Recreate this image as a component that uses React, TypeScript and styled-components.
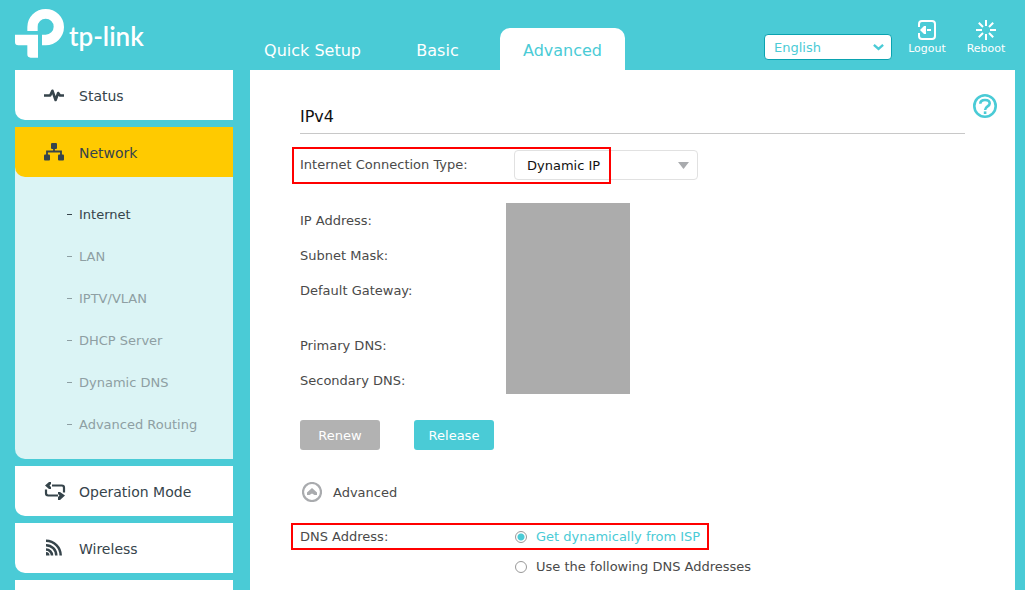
import React, { useState } from 'react';
import styled, { createGlobalStyle, css } from 'styled-components';

const teal = '#4acbd6';
const ink = '#36444b';

const GlobalStyle = createGlobalStyle`
  *, *::before, *::after { box-sizing: border-box; }
  body { margin: 0; background: ${teal}; }
  body, button, select, input { font-family: Verdana, "DejaVu Sans", sans-serif; font-size: 13px; }
  a { color: inherit; text-decoration: none; }
  ul, dl, dt, h1, fieldset { margin: 0; padding: 0; }
  ul { list-style: none; }
`;

const Page = styled.div`
  display: flex;
  flex-direction: column;
  height: 100vh;
  overflow: hidden;
  background: ${teal};
`;

const Header = styled.header`
  display: flex;
  flex: none;
  height: 70px;
  color: #fff;
`;

const Brand = styled.a`
  display: flex;
  align-items: flex-start;
  width: 250px;
  padding: 9px 0 0 15px;
`;

const BrandMark = styled.svg`
  flex: none;
  width: 49px;
  height: 49px;
`;

const BrandName = styled.span`
  margin: 10px 0 0 5px;
  font-family: Lato, sans-serif;
  font-size: 26px;
  font-weight: 600;
  line-height: 34px;
`;

const Tabs = styled.nav`
  display: flex;
  align-items: flex-end;
`;

const Tab = styled.a<{ $active?: boolean }>`
  width: 125px;
  height: 42px;
  border-radius: 10px 10px 0 0;
  font-size: 16px;
  line-height: 45px;
  text-align: center;
  ${(p) => p.$active && css`
    background: #fff;
    color: ${teal};
  `}
`;

const Tools = styled.div`
  display: flex;
  align-items: flex-start;
  margin-left: auto;
  padding-right: 19px;
`;

const SelectBox = styled.div`
  display: grid;
  align-items: center;
  > * { grid-area: 1 / 1; }
  > svg { justify-self: end; pointer-events: none; }
`;

const LanguageBox = styled(SelectBox)`
  width: 128px;
  margin: 34px 15px 0 0;
  > svg { margin-right: 8px; }
`;

const LanguageSelect = styled.select`
  appearance: none;
  height: 26px;
  padding: 0 9px;
  border: 1px solid #0aa3b0;
  border-radius: 4px;
  background: #fff;
  color: ${teal};
`;

const Action = styled.button`
  display: flex;
  flex-direction: column;
  align-items: center;
  width: 40px;
  margin: 20px 0 0;
  padding: 0;
  border: 0;
  background: none;
  color: #fff;
  font-size: 11px;
  line-height: 18px;
  & + & { margin-left: 19px; }
`;

const Body = styled.div`
  display: flex;
  flex: 1;
  min-height: 0;
  padding: 0 10px 0 15px;
  gap: 17px;
`;

const Sidebar = styled.nav`
  flex: none;
  width: 218px;
`;

const Menu = styled.ul`
  display: flex;
  flex-direction: column;
  gap: 7px;
`;

const MenuItem = styled.li<{ $open?: boolean }>`
  min-height: 50px;
  border-bottom-left-radius: 10px;
  background: ${(p) => (p.$open ? '#dbf4f5' : '#fff')};
`;

const MenuLink = styled.a<{ $active?: boolean }>`
  display: flex;
  align-items: center;
  gap: 15px;
  height: 50px;
  padding: 2px 0 0 29px;
  border-bottom-left-radius: 10px;
  background: ${(p) => (p.$active ? '#ffca00' : 'transparent')};
  color: ${ink};
  font-size: 14px;
  > svg { overflow: visible; }
`;

const Submenu = styled.ul`
  padding: 16px 0 14px;
`;

const SubLink = styled.a<{ $active?: boolean }>`
  display: flex;
  align-items: center;
  gap: 7px;
  height: 42px;
  padding-left: 52px;
  color: ${(p) => (p.$active ? ink : '#8e9fa3')};
  &::before { content: ''; width: 5px; height: 1px; margin-top: 1px; background: currentColor; }
`;

const Main = styled.main`
  display: flex;
  flex: 1;
  align-items: flex-start;
  gap: 8px;
  min-width: 0;
  padding: 24px 18px 0 50px;
  background: #fff;
  color: #4a4a4a;
`;

const Content = styled.div`
  flex: 1;
  min-width: 0;
`;

const Title = styled.h1`
  height: 40px;
  padding-top: 4px;
  border-bottom: 1px solid #c8c8c8;
  color: #111;
  font-size: 16px;
  font-weight: 400;
  line-height: 37px;
`;

const HelpButton = styled.button`
  display: flex;
  padding: 0;
  border: 0;
  background: none;
  color: ${teal};
`;

const Row = styled.div`
  position: relative;
  display: grid;
  grid-template-columns: 214px 1fr;
  align-items: center;
  margin-top: 16px;
  line-height: 30px;
`;

const Highlight = styled.span<{ $width: number; $height: number; $inset: number }>`
  position: absolute;
  top: ${(p) => (p.$height > 30 ? -3 : 1)}px;
  left: -${(p) => p.$inset}px;
  width: ${(p) => p.$width}px;
  height: ${(p) => p.$height}px;
  border: 2px solid #f00;
  pointer-events: none;
`;

const TypeBox = styled(SelectBox)`
  width: 184px;
  > svg { margin-right: 9px; }
`;

const TypeSelect = styled.select`
  appearance: none;
  height: 30px;
  padding: 0 12px;
  border: 1px solid #e1e1e1;
  border-radius: 4px;
  background: #fff;
  color: #111;
`;

const Details = styled.div`
  display: flex;
  margin-top: 23px;
`;

const Terms = styled.dl`
  width: 206px;
  line-height: 35px;
`;

const Term = styled.dt<{ $spaced?: boolean }>`
  margin-top: ${(p) => (p.$spaced ? 20 : 0)}px;
`;

const Redaction = styled.div`
  width: 124px;
  margin-bottom: 4px;
  background: #acacac;
`;

const Buttons = styled.div`
  display: flex;
  gap: 34px;
  margin-top: 22px;
`;

const Button = styled.button<{ $muted?: boolean }>`
  width: 80px;
  height: 30px;
  padding: 0;
  border: 0;
  border-radius: 3px;
  background: ${(p) => (p.$muted ? '#b2b2b2' : teal)};
  color: #fff;
`;

const Disclosure = styled.button`
  display: flex;
  align-items: center;
  gap: 11px;
  height: 30px;
  margin-top: 27px;
  padding: 0 0 0 2px;
  border: 0;
  background: none;
  color: inherit;
`;

const RadioRow = styled.fieldset`
  position: relative;
  display: flex;
  margin-top: 15px;
  border: 0;
  line-height: 30px;
`;

const Legend = styled.legend`
  float: left;
  width: 214px;
  padding: 0;
`;

const Option = styled.label<{ $on: boolean }>`
  display: flex;
  align-items: center;
  gap: 8px;
  color: ${(p) => (p.$on ? teal : 'inherit')};
`;

const Radio = styled.input`
  appearance: none;
  width: 12px;
  height: 12px;
  margin: 0 1px;
  border: 1px solid #999;
  border-radius: 50%;
  background: #fff;
  &:checked {
    background: radial-gradient(circle, ${teal} 3px, #fff 4px);
  }
`;

const StatusIcon = () => (
  <svg width="20" height="20" viewBox="0 0 20 20" fill="none" stroke={ink} strokeWidth="2.6" strokeLinejoin="round">
    <path d="M0 9.500h6.200L8.400 4.800l3.200 9.200 2.600-7 1.800 2.500H20" />
  </svg>
);

const NetworkIcon = () => (
  <svg width="20" height="20" viewBox="0 0 20 20" fill={ink}>
    <rect x="7" y="0" width="6" height="6" rx="1" />
    <rect x="0" y="11.500" width="6" height="6" rx="1" />
    <rect x="14" y="11.500" width="6" height="6" rx="1" />
    <path d="M10 5v3.500M3 12V8.500h14V12" fill="none" stroke={ink} strokeWidth="1.800" />
  </svg>
);

const ModeIcon = () => (
  <svg width="20" height="20" viewBox="0 0 20 20" fill="none" stroke={ink} strokeWidth="2.200">
    <path d="M8 3.500h9.800q2.200 0 2.200 2.200v4.800" />
    <path d="M14 13.500H4.200Q2 13.500 2 11.300V7.500" />
    <path d="M5 0h2v2L5.500 3.500 7 5v2H5L1 3.500zM16 10h-2v2l1.500 1.500L14 15v3h2l5-4.500z" fill={ink} stroke="none" />
  </svg>
);

const WirelessIcon = () => (
  <svg width="20" height="20" viewBox="0 0 20 20" fill="none" stroke={ink} strokeWidth="2.500">
    <path d="M2 1.800A14.700 14.700 0 0 1 16.700 16.500M2 6.200A10.300 10.300 0 0 1 12.300 16.500M2 10.500A6 6 0 0 1 8 16.500" />
    <path d="M2 13a3.500 3.500 0 0 1 3.500 3.500H2z" fill={ink} stroke="none" />
  </svg>
);

const LogoutIcon = () => (
  <svg width="20" height="20" viewBox="0 0 20 20" fill="none" stroke="#fff" strokeWidth="2">
    <path d="M2 7V4q0-3 3-3h10q3 0 3 3v12q0 3-3 3H5q-3 0-3-3v-3" />
    <path d="M7 6h2v2.500L8 10l1 1.500V14H7l-4-4z" fill="#fff" stroke="none" />
    <path d="M7 10h2M10 10h4" />
  </svg>
);

const RebootIcon = () => (
  <svg width="20" height="20" viewBox="0 0 20 20" fill="none" stroke="#fff" strokeWidth="2">
    <path d="M10 0v6M10 14v6M0 10h6M14 10h6M2.800 2.800 7 7M13 13l4.200 4.200M17.200 2.800 13 7M7 13l-4.200 4.200" />
  </svg>
);

const HelpIcon = () => (
  <svg width="24" height="24" viewBox="0 0 24 24" fill="none" stroke="currentColor">
    <circle cx="12" cy="12" r="10.700" strokeWidth="2.600" />
    <path d="M7.300 9.800C7.300 7.200 9.200 6 12 6s4.700 1.200 4.700 3.500c0 3-4.600 2.900-4.600 6.500" strokeWidth="2.600" />
    <path d="M12.100 17.400V20" strokeWidth="2.600" />
  </svg>
);

const CollapseIcon = () => (
  <svg width="20" height="20" viewBox="0 0 20 20" fill="none" stroke="#a9abae">
    <circle cx="10" cy="10" r="9" strokeWidth="2.200" />
    <path d="M10 6l5 4.500V13h-2.500L10 11.500 7.500 13H5v-2.500z" fill="#a9abae" stroke="none" />
  </svg>
);

const sections = ['Internet', 'LAN', 'IPTV/VLAN', 'DHCP Server', 'Dynamic DNS', 'Advanced Routing'];

export default function App() {
  const [dns, setDns] = useState('isp');
  const [expanded, setExpanded] = useState(true);

  return (
    <Page>
      <GlobalStyle />
      <Header>
        <Brand href="#">
          <BrandMark viewBox="45 27 147 147" fill="#fff" aria-hidden="true">
            <path d="M82 93V81a55 54 0 0 1 110 0a55 55 0 0 1-55 55h-11v-32h11a24 24 0 0 0 24-24a24 24 0 0 0-48 0v13z" />
            <path d="M45 104h69v69H92q-10 0-10-10v-27H55q-10 0-10-10z" />
          </BrandMark>
          <BrandName>tp-link</BrandName>
        </Brand>
        <Tabs>
          <Tab href="#">Quick Setup</Tab>
          <Tab href="#">Basic</Tab>
          <Tab href="#" $active>Advanced</Tab>
        </Tabs>
        <Tools>
          <LanguageBox>
            <LanguageSelect aria-label="Language">
              <option>English</option>
            </LanguageSelect>
            <svg width="11" height="7" viewBox="0 0 11 7" fill="none" stroke={teal} strokeWidth="2.400">
              <path d="m.9.900 4.600 4L10.100.900" />
            </svg>
          </LanguageBox>
          <Action type="button"><LogoutIcon />Logout</Action>
          <Action type="button"><RebootIcon />Reboot</Action>
        </Tools>
      </Header>
      <Body>
        <Sidebar>
          <Menu>
            <MenuItem><MenuLink href="#"><StatusIcon />Status</MenuLink></MenuItem>
            <MenuItem $open>
              <MenuLink href="#" $active><NetworkIcon />Network</MenuLink>
              <Submenu>
                {sections.map((name, i) => (
                  <li key={name}><SubLink href="#" $active={i === 0}>{name}</SubLink></li>
                ))}
              </Submenu>
            </MenuItem>
            <MenuItem><MenuLink href="#"><ModeIcon />Operation Mode</MenuLink></MenuItem>
            <MenuItem><MenuLink href="#"><WirelessIcon />Wireless</MenuLink></MenuItem>
            <MenuItem />
          </Menu>
        </Sidebar>
        <Main>
          <Content>
            <Title>IPv4</Title>
            <Row>
              <label htmlFor="connection-type">Internet Connection Type:</label>
              <TypeBox>
                <TypeSelect id="connection-type">
                  <option>Dynamic IP</option>
                </TypeSelect>
                <svg width="11" height="7" viewBox="0 0 11 7" fill="#a9abae"><path d="M0 0h11L5.500 7z" /></svg>
              </TypeBox>
              <Highlight $width={319} $height={37} $inset={8} />
            </Row>
            <Details>
              <Terms>
                <Term>IP Address:</Term>
                <Term>Subnet Mask:</Term>
                <Term>Default Gateway:</Term>
                <Term $spaced>Primary DNS:</Term>
                <Term>Secondary DNS:</Term>
              </Terms>
              <Redaction />
            </Details>
            <Buttons>
              <Button type="button" $muted>Renew</Button>
              <Button type="button">Release</Button>
            </Buttons>
            <Disclosure type="button" aria-expanded={expanded} onClick={() => setExpanded(!expanded)}>
              <CollapseIcon />Advanced
            </Disclosure>
            {expanded && (
              <RadioRow>
                <Legend>DNS Address:</Legend>
                <div>
                  <Option $on={dns === 'isp'}>
                    <Radio type="radio" name="dns" checked={dns === 'isp'} onChange={() => setDns('isp')} />
                    Get dynamically from ISP
                  </Option>
                  <Option $on={dns === 'manual'}>
                    <Radio type="radio" name="dns" checked={dns === 'manual'} onChange={() => setDns('manual')} />
                    Use the following DNS Addresses
                  </Option>
                </div>
                <Highlight $width={418} $height={27} $inset={9} />
              </RadioRow>
            )}
          </Content>
          <HelpButton type="button" aria-label="Help"><HelpIcon /></HelpButton>
        </Main>
      </Body>
    </Page>
  );
}
